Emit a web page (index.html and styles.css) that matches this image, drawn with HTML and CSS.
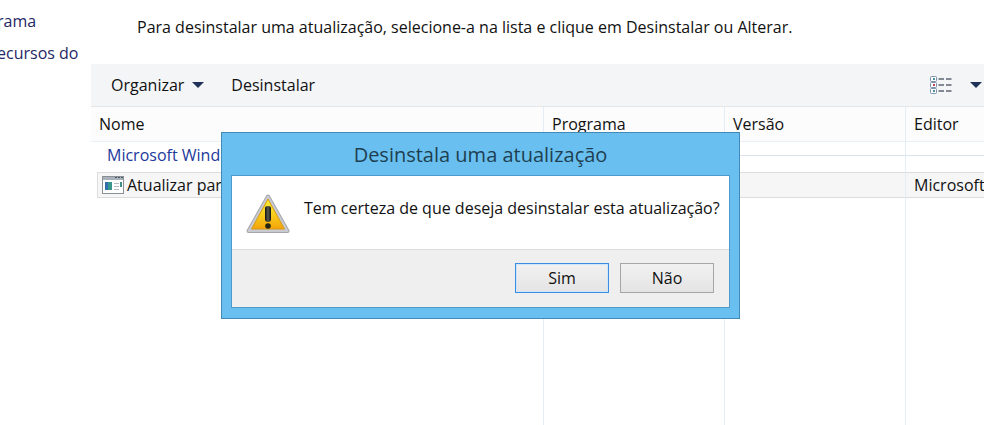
FILE: index.html
```html
<!DOCTYPE html>
<html lang="pt-BR">
<head>
<meta charset="utf-8">
<title>Atualizações instaladas</title>
<link rel="stylesheet" href="styles.css">
</head>
<body>
<div class="window">
  <nav class="sidebar">
    <a href="#">rama</a>
    <a href="#">ecursos do</a>
  </nav>
  <main class="content">
    <p class="hint">Para desinstalar uma atualização, selecione-a na lista e clique em Desinstalar ou Alterar.</p>
    <div class="toolbar">
      <button class="tool" type="button">Organizar
        <svg class="caret" width="12" height="6" viewBox="0 0 12 6"><path d="M0 0h12L6 6z"/></svg>
      </button>
      <button class="tool" type="button">Desinstalar</button>
      <button class="tool view" type="button" aria-label="Modo de exibição">
        <svg width="22" height="20" viewBox="0 0 22 20">
          <g fill="#fff" stroke="#7d91a8"><rect x=".5" y="1.5" width="6" height="5" rx="1"/><rect x=".5" y="7.5" width="6" height="5" rx="1"/><rect x=".5" y="13.5" width="6" height="5" rx="1"/></g>
          <path fill="#4a90a0" d="M3 3h2v2H3zM3 15h2v2H3z"/><path fill="#c0405a" d="M3 9h2v2H3z"/>
          <path stroke="#5c6672" stroke-width="1.4" d="M8.500 4h5.500M16 4h5.500M8.500 10h5.500M16 10h5.500M8.500 16h5.500M16 16h5.500"/>
        </svg>
        <svg class="caret" width="12" height="6" viewBox="0 0 12 6"><path d="M0 0h12L6 6z"/></svg>
      </button>
    </div>
    <table class="list">
      <colgroup><col class="col-name"><col class="col-mid"><col class="col-mid"><col></colgroup>
      <thead>
        <tr><th>Nome</th><th>Programa</th><th>Versão</th><th>Editor</th></tr>
      </thead>
      <tbody>
        <tr class="group"><td><div class="group-name">Microsoft Windows</div></td><td></td><td></td><td></td></tr>
        <tr class="item">
          <td><div class="item-name">
            <svg width="22" height="18" viewBox="0 0 22 18">
              <rect x=".5" y=".5" width="21" height="17" fill="#fff" stroke="#8b9096"/>
              <path fill="#a9b2bb" d="M1 1h20v3H1z"/>
              <path fill="#4b5663" d="M13 1h2v1h-2zM16 1h2v1h-2zM19 1h2v1h-2z"/>
              <path fill="#36978a" d="M3 6h7v8H3z"/><path fill="#2f6fae" d="M3 6h3v8H3z"/>
              <path stroke="#b5bcc3" d="M12 7.500h5M12 10.500h5M12 13.500h5"/><path fill="#3f8f8a" d="M18 6h2v5h-2z"/>
            </svg>Atualizar para</div></td>
          <td></td><td></td><td>Microsoft</td>
        </tr>
        <tr class="rest"><td></td><td></td><td></td><td></td></tr>
      </tbody>
    </table>
  </main>
</div>
<section class="dialog" role="dialog" aria-labelledby="dialog-title">
  <h1 id="dialog-title">Desinstala uma atualização</h1>
  <div class="panel">
    <div class="message">
      <svg width="44" height="40" viewBox="0 0 44 40">
        <defs>
          <linearGradient id="amber" x1="0" y1="0" x2="0" y2="1"><stop offset="0" stop-color="#f6ee35"/><stop offset=".5" stop-color="#f8d01c"/><stop offset="1" stop-color="#f4a30c"/></linearGradient>
          <linearGradient id="ink" x1="0" y1="0" x2="1" y2="0"><stop offset="0" stop-color="#111"/><stop offset=".5" stop-color="#555a50"/><stop offset="1" stop-color="#111"/></linearGradient>
        </defs>
        <path d="M22 2.500L41.500 37h-39z" fill="#c9cbd0" stroke="#a4a6ab" stroke-width="4" stroke-linejoin="round"/>
        <path d="M22 2.500L41.500 37h-39z" fill="#c9cbd0" stroke="#c9cbd0" stroke-width="2" stroke-linejoin="round"/>
        <path d="M22 5L38.500 35h-33z" fill="url(#amber)" stroke="#d69a12" stroke-linejoin="round"/>
        <path d="M19 14q0-2 3-2t3 2v11q0 3-3 3t-3-3z" fill="url(#ink)"/>
        <circle cx="22" cy="32" r="2.800" fill="#252410"/>
      </svg>
      <p>Tem certeza de que deseja desinstalar esta atualização?</p>
    </div>
    <div class="actions">
      <button class="button primary" type="button">Sim</button>
      <button class="button" type="button">Não</button>
    </div>
  </div>
</section>
</body>
</html>
```
FILE: styles.css
```css
* { box-sizing: border-box; }
body {
  margin: 0;
  overflow: hidden;
  background: #fff;
  color: #111;
  font: 16px/20px "Open Sans", "Noto Sans", sans-serif;
}
button { font: inherit; color: inherit; }
svg { flex: none; }
p, h1 { margin: 0; }
.window { display: flex; min-height: 100vh; }
.sidebar {
  display: flex;
  flex-direction: column;
  flex: 0 0 94px;
  gap: 12px;
  margin-left: -3px;
  padding-top: 11px;
}
.sidebar a { color: #1f2765; text-decoration: none; white-space: nowrap; }
.content { flex: 1; min-width: 0; display: flex; flex-direction: column; }
.hint { padding: 17px 0 27px 46px; white-space: nowrap; }
.toolbar {
  display: flex;
  align-items: center;
  gap: 27px;
  height: 43px;
  padding: 0 2px 0 20px;
  background: #f4f5f7;
  border-bottom: 1px solid #e4e7ea;
}
.tool {
  display: flex;
  align-items: center;
  gap: 8px;
  padding: 0;
  border: 0;
  background: none;
}
.view { margin-left: auto; gap: 18px; }
.caret { fill: #1f3358; }
.list {
  width: 100%;
  height: calc(100vh - 107px);
  table-layout: fixed;
  border-spacing: 0;
}
.col-name { width: 453px; }
.col-mid { width: 181px; }
th, td {
  padding: 0 0 0 8px;
  border-right: 1px solid #e3edf7;
  overflow: hidden;
  white-space: nowrap;
  text-align: left;
  font-weight: 400;
}
th:last-child, td:last-child { border-right: 0; }
th { height: 35px; background: #fcfcfc; border-bottom: 1px solid #e8f0f8; }
.group td {
  height: 30px;
  background: linear-gradient(#dbe4ee, #dbe4ee) 0 13px / 100% 1px no-repeat;
}
.group td:first-child { padding: 0 0 4px 16px; background: none; }
.group-name { display: flex; align-items: center; gap: 8px; height: 26px; color: #22399c; }
.group-name::after { content: ""; flex: 1; height: 1px; background: #dbe4ee; }
.item td { height: 26px; background: #f6f6f6; border-top: 1px solid #dcdcdc; border-bottom: 1px solid #dcdcdc; }
.item td:first-child { padding: 0 0 0 6px; background: none; border-top: 0; border-bottom: 0; }
.item-name {
  display: flex;
  align-items: center;
  gap: 3px;
  height: 26px;
  padding-left: 4px;
  background: #f6f6f6;
  border: 1px solid #dcdcdc;
  border-right: 0;
}
.dialog {
  position: absolute;
  top: 132px;
  left: 221px;
  width: 519px;
  padding: 0 9px 10px;
  background: #69c0f0;
  border: 1px solid #4389b5;
}
.dialog h1 {
  padding: 8px 0 7px;
  color: #1f3f50;
  font-size: 20px;
  line-height: 27px;
  font-weight: 400;
  text-align: center;
}
.panel { background: #fff; border: 1px solid #4c9bcb; }
.message { display: flex; height: 73px; padding: 18px 14px 0; gap: 14px; white-space: nowrap; }
.message p { padding-top: 4px; }
.actions {
  display: flex;
  justify-content: flex-end;
  gap: 11px;
  padding: 13px 15px 14px;
  background: #efefef;
  border-top: 1px solid #dcdcdc;
}
.button {
  width: 94px;
  height: 30px;
  padding: 0;
  border: 1px solid #a6a6a6;
  background: linear-gradient(#f1f1f1, #e4e4e4);
}
.primary { border-color: #3b8de0; box-shadow: inset 0 0 0 1px #cfe6fa; }
```
